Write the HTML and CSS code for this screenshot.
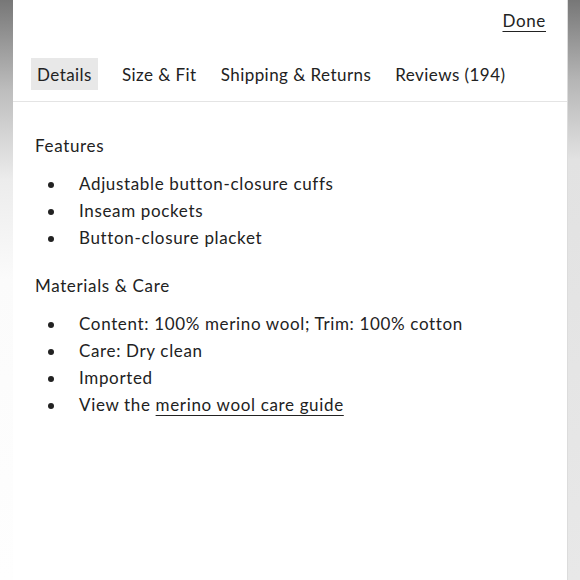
FILE: index.html
```html
<!DOCTYPE html>
<html>
<head>
<meta charset="utf-8">
<link rel="stylesheet" href="styles.css">
</head>
<body>
<div class="page">
  <div class="edge edge-left"></div>
  <div class="panel">
    <div class="top">
      <a class="done" href="#">Done</a>
    </div>
    <div class="tabs">
      <span class="tab active">Details</span>
      <span class="tab">Size &amp; Fit</span>
      <span class="tab">Shipping &amp; Returns</span>
      <span class="tab">Reviews (194)</span>
    </div>
    <div class="content">
      <h3 class="heading">Features</h3>
      <ul class="list">
        <li>Adjustable button-closure cuffs</li>
        <li>Inseam pockets</li>
        <li>Button-closure placket</li>
      </ul>
      <h3 class="heading">Materials &amp; Care</h3>
      <ul class="list">
        <li>Content: 100% merino wool; Trim: 100% cotton</li>
        <li>Care: Dry clean</li>
        <li>Imported</li>
        <li><span>View the <a class="link" href="#">merino wool care guide</a></span></li>
      </ul>
    </div>
  </div>
  <div class="edge edge-right"></div>
</div>
</body>
</html>
```

FILE: styles.css
```css
html, body {
  margin: 0;
  padding: 0;
  background: #fff;
}
body {
  font-family: Lato, "Noto Sans", sans-serif;
  color: #222;
  font-size: 17px;
  letter-spacing: 0.65px;
}
.page {
  display: flex;
  width: 580px;
  height: 580px;
  overflow: hidden;
}
.edge {
  width: 13px;
  flex: none;
}
.edge-left {
  background: linear-gradient(#777 0, #bdbdbd 90px, #ececec 180px, #fbfbfb 280px, #fefefe 580px);
}
.edge-right {
  background: linear-gradient(#777 0, #b5b5b5 80px, #e2e2e2 160px, #e8e8e8 580px);
  border-left: 1px solid #dcdcdc;
  width: 12px;
}
.panel {
  flex: 1;
  background: #fff;
  display: flex;
  flex-direction: column;
}
.top {
  display: flex;
  justify-content: flex-end;
  padding: 10px 21px 0 0;
  height: 48px;
  box-sizing: border-box;
}
.done {
  color: #222;
  text-decoration: underline;
  text-underline-offset: 4px;
  text-decoration-thickness: 1px;
  line-height: 22px;
}
.tabs {
  display: flex;
  gap: 12px;
  padding: 10px 0 11px 18px;
  border-bottom: 1px solid #e4e4e4;
  letter-spacing: 0.45px;
}
.tab {
  padding: 0 6px;
  height: 32px;
  line-height: 33px;
  color: #222;
}
.tab.active {
  background: #e8e8e8;
  margin-right: 6px;
}
.content {
  padding: 32px 0 0 22px;
}
.heading {
  margin: 0;
  font-weight: normal;
  font-size: 17px;
  line-height: 24px;
}
.list {
  list-style: none;
  margin: 12px 0 23px 0;
  padding: 0;
}
.list li {
  display: flex;
  align-items: center;
  height: 27px;
  padding-left: 44px;
  position: relative;
}
.list li::before {
  content: "";
  position: absolute;
  left: 13px;
  top: 12px;
  width: 6px;
  height: 6px;
  border-radius: 50%;
  background: #222;
}
.link {
  color: #222;
  text-decoration: underline;
  text-underline-offset: 4px;
}
```
